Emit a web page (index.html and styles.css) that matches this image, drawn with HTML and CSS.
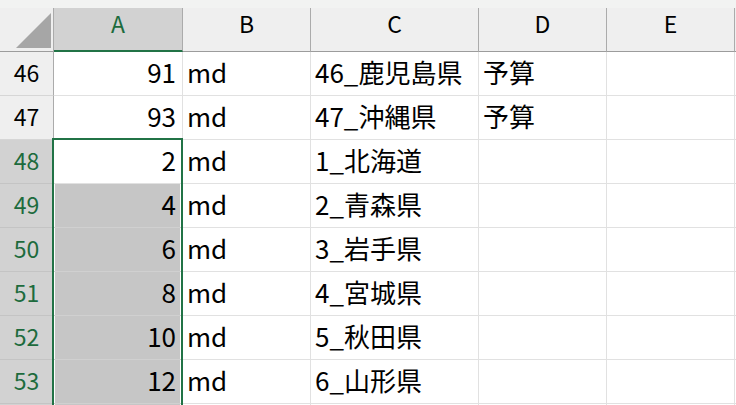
FILE: index.html
```html
<!DOCTYPE html>
<html lang="ja">
<head>
<meta charset="utf-8">
<title>Sheet</title>
<link rel="stylesheet" href="styles.css">
</head>
<body>
<div class="strip"></div>
<div class="grid">
  <div class="hd corner"><svg class="tri" width="35" height="35" viewBox="0 0 35 35"><polygon points="35,0 35,35 0,35" fill="#a6a6a6"/></svg></div>
  <div class="hd col on"><span class="lbl">A</span></div>
  <div class="hd col"><span class="lbl">B</span></div>
  <div class="hd col"><span class="lbl">C</span></div>
  <div class="hd col"><span class="lbl">D</span></div>
  <div class="hd col"><span class="lbl">E</span></div>
  <div class="hd col"></div>

  <div class="rh">46</div>
  <div class="cell num">91</div>
  <div class="cell">md</div>
  <div class="cell">46_鹿児島県</div>
  <div class="cell">予算</div>
  <div class="cell"></div>
  <div class="cell"></div>

  <div class="rh">47</div>
  <div class="cell num">93</div>
  <div class="cell">md</div>
  <div class="cell">47_沖縄県</div>
  <div class="cell">予算</div>
  <div class="cell"></div>
  <div class="cell"></div>

  <div class="rh on">48</div>
  <div class="cell num">2</div>
  <div class="cell">md</div>
  <div class="cell">1_北海道</div>
  <div class="cell"></div>
  <div class="cell"></div>
  <div class="cell"></div>

  <div class="rh on">49</div>
  <div class="cell num hl">4</div>
  <div class="cell">md</div>
  <div class="cell">2_青森県</div>
  <div class="cell"></div>
  <div class="cell"></div>
  <div class="cell"></div>

  <div class="rh on">50</div>
  <div class="cell num hl">6</div>
  <div class="cell">md</div>
  <div class="cell">3_岩手県</div>
  <div class="cell"></div>
  <div class="cell"></div>
  <div class="cell"></div>

  <div class="rh on">51</div>
  <div class="cell num hl">8</div>
  <div class="cell">md</div>
  <div class="cell">4_宮城県</div>
  <div class="cell"></div>
  <div class="cell"></div>
  <div class="cell"></div>

  <div class="rh on">52</div>
  <div class="cell num hl">10</div>
  <div class="cell">md</div>
  <div class="cell">5_秋田県</div>
  <div class="cell"></div>
  <div class="cell"></div>
  <div class="cell"></div>

  <div class="rh on">53</div>
  <div class="cell num hl">12</div>
  <div class="cell">md</div>
  <div class="cell">6_山形県</div>
  <div class="cell"></div>
  <div class="cell"></div>
  <div class="cell"></div>

  <div class="rh on tail"></div>
  <div class="cell num hl tail"></div>
  <div class="cell tail"></div>
  <div class="cell tail"></div>
  <div class="cell tail"></div>
  <div class="cell tail"></div>
  <div class="cell tail"></div>

  <div class="selection"></div>
</div>
</body>
</html>
```

FILE: styles.css
```css
html, body {
  margin: 0;
  padding: 0;
  overflow: hidden;
  background: #ffffff;
}

body {
  height: 405px;
  font-family: "Noto Sans CJK JP", "Noto Sans", sans-serif;
  color: #000000;
}

.strip {
  height: 8px;
  background: #f2f3f2;
}

.grid {
  position: relative;
  display: grid;
  grid-template-columns: 54px 129px 128px 168px 128px 128px 1fr;
  grid-template-rows: repeat(9, 44px) 1px;
}

.hd {
  box-sizing: border-box;
  background: #efefef;
  border-right: 1px solid #ababab;
  border-bottom: 1px solid #9c9c9c;
  display: flex;
  justify-content: center;
  align-items: flex-start;
  font-size: 23px;
  color: #000000;
}

.lbl {
  display: block;
  line-height: 30px;
  height: 30px;
}

.hd.on {
  background: #d2d2d2;
  color: #1d6b3d;
  border-bottom: 2px solid #217346;
}

.corner {
  justify-content: flex-end;
  align-items: flex-end;
  padding: 0 2px 3px 0;
}

.tri {
  display: block;
}

.rh {
  box-sizing: border-box;
  background: #efefef;
  border-right: 1px solid #ababab;
  border-bottom: 1px solid #d6d6d6;
  display: flex;
  justify-content: center;
  align-items: center;
  padding-bottom: 3px;
  font-size: 23px;
  line-height: 23px;
}

.rh.on {
  background: #d2d2d2;
  color: #1d6b3d;
  border-bottom-color: #c4c4c4;
}

.cell {
  box-sizing: border-box;
  border-right: 1px solid #e1e1e1;
  border-bottom: 1px solid #e1e1e1;
  display: flex;
  align-items: center;
  padding: 0 4px 4px 4px;
  font-size: 26px;
  line-height: 26px;
  white-space: nowrap;
}

.tail {
  border-bottom: 0;
  padding: 0;
}

.num {
  justify-content: flex-end;
  padding-right: 6px;
}

.hl {
  background: #c6c6c6;
  box-shadow: inset 1px 0 #ffffff, inset -2px 0 #ffffff;
  border-bottom-color: #d0d0d0;
}

.selection {
  position: absolute;
  left: 52px;
  top: 130px;
  width: 131px;
  height: 267px;
  box-sizing: border-box;
  border: 2px solid #217346;
  border-bottom: 0;
  pointer-events: none;
}
```
